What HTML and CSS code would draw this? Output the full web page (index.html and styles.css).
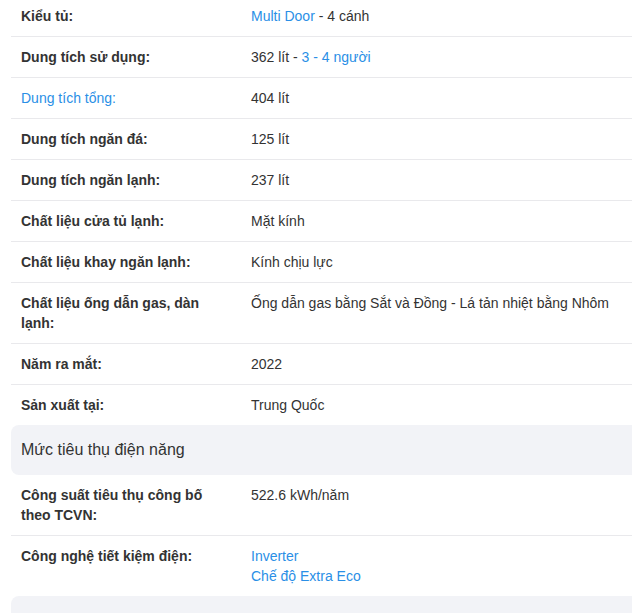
FILE: index.html
```html
<!DOCTYPE html>
<html lang="vi">
<head>
<meta charset="utf-8">
<link rel="stylesheet" href="styles.css">
</head>
<body>
<div class="specs">
  <ul class="spec-list">
    <li class="row"><span class="label">Kiểu tủ:</span><span class="value"><a class="link">Multi Door</a> - 4 cánh</span></li>
    <li class="row"><span class="label">Dung tích sử dụng:</span><span class="value">362 lít - <a class="link">3 - 4 người</a></span></li>
    <li class="row"><span class="label"><a class="link plain">Dung tích tổng:</a></span><span class="value">404 lít</span></li>
    <li class="row"><span class="label">Dung tích ngăn đá:</span><span class="value">125 lít</span></li>
    <li class="row"><span class="label">Dung tích ngăn lạnh:</span><span class="value">237 lít</span></li>
    <li class="row"><span class="label">Chất liệu cửa tủ lạnh:</span><span class="value">Mặt kính</span></li>
    <li class="row"><span class="label">Chất liệu khay ngăn lạnh:</span><span class="value">Kính chịu lực</span></li>
    <li class="row"><span class="label">Chất liệu ống dẫn gas, dàn lạnh:</span><span class="value">Ống dẫn gas bằng Sắt và Đồng - Lá tản nhiệt bằng Nhôm</span></li>
    <li class="row"><span class="label">Năm ra mắt:</span><span class="value">2022</span></li>
    <li class="row"><span class="label">Sản xuất tại:</span><span class="value">Trung Quốc</span></li>
  </ul>
  <h3 class="section-title">Mức tiêu thụ điện năng</h3>
  <ul class="spec-list">
    <li class="row"><span class="label">Công suất tiêu thụ công bố theo TCVN:</span><span class="value">522.6 kWh/năm</span></li>
    <li class="row"><span class="label">Công nghệ tiết kiệm điện:</span><span class="value values"><a class="link">Inverter</a><a class="link">Chế độ Extra Eco</a></span></li>
  </ul>
  <div class="section-title section-next"></div>
</div>
</body>
</html>
```
FILE: styles.css
```css
html, body {
  margin: 0;
  padding: 0;
  overflow: hidden;
  background: #fff;
}
body {
  font-family: "Liberation Sans", Arial, sans-serif;
  font-size: 14px;
  line-height: 20px;
  color: #333;
}
.specs {
  margin: -4px 0 0 11px;
  width: 700px;
}
.spec-list {
  list-style: none;
  margin: 0;
  padding: 0;
}
.row {
  display: flex;
  padding: 10px 0 10px 10px;
  border-bottom: 1px solid #e9e9ec;
}
.row:last-child {
  border-bottom: none;
}
.label {
  flex: 0 0 200px;
  padding-right: 30px;
  font-weight: bold;
  color: #333;
}
.value {
  flex: 1;
  color: #333;
}
.values {
  display: flex;
  flex-direction: column;
}
.link {
  color: #2a8fe6;
  text-decoration: none;
}
.plain {
  font-weight: normal;
}
.section-title {
  margin: 0;
  padding: 15px 10px;
  font-size: 16px;
  font-weight: normal;
  line-height: 20px;
  color: #333;
  background: #f2f3f7;
  border-radius: 8px;
}
.section-next {
  height: 20px;
}
```
